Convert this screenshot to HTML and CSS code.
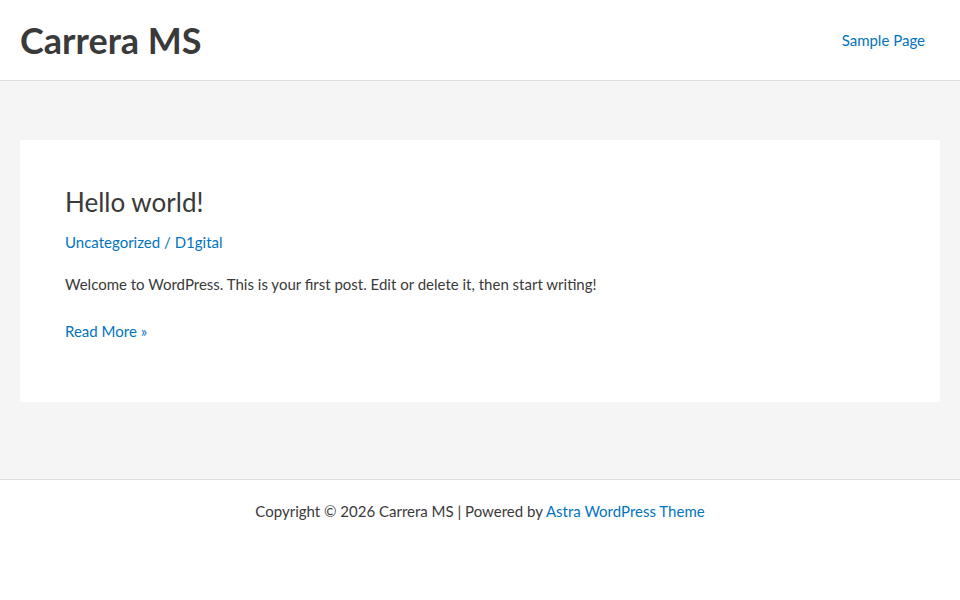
FILE: index.html
```html
<!DOCTYPE html>
<html lang="en">
<head>
<meta charset="utf-8">
<title>Carrera MS</title>
<link rel="stylesheet" href="styles.css">
</head>
<body>
<header class="site-header">
  <a class="site-title" href="#">Carrera MS</a>
  <nav class="main-nav"><a href="#">Sample Page</a></nav>
</header>
<main class="site-content">
  <article class="post">
    <h2 class="entry-title">Hello world!</h2>
    <div class="entry-meta"><a href="#">Uncategorized</a> / <a href="#">D1gital</a></div>
    <p class="entry-text">Welcome to WordPress. This is your first post. Edit or delete it, then start writing!</p>
    <a class="read-more" href="#">Read More »</a>
  </article>
</main>
<footer class="site-footer">
  <p>Copyright © 2026 Carrera MS | Powered by <a href="#">Astra WordPress Theme</a></p>
</footer>
</body>
</html>
```
FILE: styles.css
```css
html,body{margin:0;padding:0}
body{font-family:Lato,"Liberation Sans",sans-serif;font-size:15px;color:#3a3a3a;background:#fff}
a{color:#0274be;text-decoration:none}
.site-header{height:81px;box-sizing:border-box;border-bottom:1px solid #dedede;display:flex;align-items:center;justify-content:space-between;padding:0 35px 0 20px}
.site-title{font-size:36px;font-weight:700;color:#3a3a3a;line-height:1}
.main-nav a{font-size:15px}
.site-content{background:#f5f5f5;padding:59px 20px 77px}
.post{background:#fff;padding:47px 45px 0;height:262px;box-sizing:border-box;border-radius:2px}
.entry-title{font-size:26px;font-weight:400;margin:0;line-height:31px;color:#3a3a3a}
.entry-meta{margin-top:11px;line-height:27px;color:#0274be}
.entry-text{margin:15px 0 0;line-height:27px}
.read-more{display:block;margin-top:20px;line-height:27px;width:max-content}
.site-footer{border-top:1px solid #dedede;text-align:center;padding:18px 0}
.site-footer p{margin:0;line-height:27px}
```
